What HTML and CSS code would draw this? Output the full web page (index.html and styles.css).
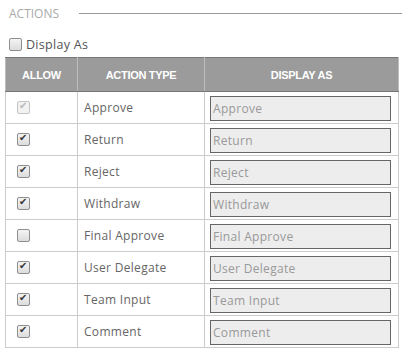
FILE: index.html
```html
<!DOCTYPE html>
<html lang="en">
<head>
    <meta charset="UTF-8">
    <title>Actions</title>
    <link rel="stylesheet" href="styles.css">
</head>
<body>
    <div class="panel">
        <div class="section-title">
            <span>ACTIONS</span>
            <div class="rule"></div>
        </div>

        <label class="display-toggle">
            <input type="checkbox" class="chk">
            <span>Display As</span>
        </label>

        <table class="actions">
            <thead>
                <tr>
                    <th class="col-allow">ALLOW</th>
                    <th class="col-type">ACTION TYPE</th>
                    <th class="col-display">DISPLAY AS</th>
                </tr>
            </thead>
            <tbody>
                <tr>
                    <td class="cell-allow"><input type="checkbox" class="chk" checked disabled></td>
                    <td>Approve</td>
                    <td class="cell-display"><input type="text" class="display-input" value="Approve" disabled></td>
                </tr>
                <tr>
                    <td class="cell-allow"><input type="checkbox" class="chk" checked></td>
                    <td>Return</td>
                    <td class="cell-display"><input type="text" class="display-input" value="Return" disabled></td>
                </tr>
                <tr>
                    <td class="cell-allow"><input type="checkbox" class="chk" checked></td>
                    <td>Reject</td>
                    <td class="cell-display"><input type="text" class="display-input" value="Reject" disabled></td>
                </tr>
                <tr>
                    <td class="cell-allow"><input type="checkbox" class="chk" checked></td>
                    <td>Withdraw</td>
                    <td class="cell-display"><input type="text" class="display-input" value="Withdraw" disabled></td>
                </tr>
                <tr>
                    <td class="cell-allow"><input type="checkbox" class="chk"></td>
                    <td>Final Approve</td>
                    <td class="cell-display"><input type="text" class="display-input" value="Final Approve" disabled></td>
                </tr>
                <tr>
                    <td class="cell-allow"><input type="checkbox" class="chk" checked></td>
                    <td>User Delegate</td>
                    <td class="cell-display"><input type="text" class="display-input" value="User Delegate" disabled></td>
                </tr>
                <tr>
                    <td class="cell-allow"><input type="checkbox" class="chk" checked></td>
                    <td>Team Input</td>
                    <td class="cell-display"><input type="text" class="display-input" value="Team Input" disabled></td>
                </tr>
                <tr>
                    <td class="cell-allow"><input type="checkbox" class="chk" checked></td>
                    <td>Comment</td>
                    <td class="cell-display"><input type="text" class="display-input" value="Comment" disabled></td>
                </tr>
            </tbody>
        </table>
    </div>
</body>
</html>
```

FILE: styles.css
```css
body {
    margin: 0;
    background: #fff;
    font-family: "Open Sans", Arial, sans-serif;
    font-size: 12px;
    color: #666;
}
.panel {
    width: 394px;
    padding: 4px 0 0 5px;
}
.section-title {
    display: flex;
    align-items: center;
    height: 18px;
    padding-left: 4px;
    color: #aaa;
    font-size: 12px;
}
.rule {
    flex: 1;
    height: 1px;
    background: #999;
    margin-left: 20px;
    margin-right: -3px;
}
.display-toggle {
    display: flex;
    align-items: center;
    gap: 4px;
    height: 20px;
    margin: 12px 0 3px 4px;
    color: #555;
    font-size: 12.5px;
    letter-spacing: 0.3px;
}
.chk {
    appearance: none;
    -webkit-appearance: none;
    width: 13px;
    height: 13px;
    margin: 0;
    border: 1px solid #8f8f8f;
    border-radius: 2px;
    background: linear-gradient(#f4f4f4, #dcdcdc);
    position: relative;
    display: block;
}
.chk:checked::after {
    content: "\2714";
    position: absolute;
    left: 1px;
    top: -2px;
    font-family: "DejaVu Sans", sans-serif;
    font-size: 10px;
    color: #333;
}
.chk:disabled {
    border-color: #c4c4c4;
    background: #f2f2f2;
}
.chk:disabled::after {
    color: #b8b8b8;
}
.actions {
    width: 394px;
    border-collapse: collapse;
    border: 1px solid #777;
}
.actions th {
    height: 33px;
    padding: 0;
    background: #9b9b9b;
    color: #fff;
    font-family: "Liberation Sans", Arial, sans-serif;
    font-weight: bold;
    font-size: 11px;
    letter-spacing: -0.3px;
    border: 1px solid #777;
    border-left-color: #bdbdbd;
    border-right-color: #bdbdbd;
}
.col-allow {
    width: 71px;
}
.col-type {
    width: 126px;
}
.actions td {
    height: 29px;
    padding: 0 0 0 6px;
    border: 1px solid #ccc;
    line-height: 16px;
    letter-spacing: 0.3px;
    color: #666;
}
.actions td.cell-allow {
    padding-left: 11px;
}
.actions td.cell-display {
    padding: 2px 7px 0 5px;
}
.display-input {
    box-sizing: border-box;
    display: block;
    width: 100%;
    height: 25px;
    margin: 0;
    padding: 0 2px;
    border: 1px solid #666;
    border-radius: 0;
    background: #ededed;
    color: #999;
    font-family: "Open Sans", Arial, sans-serif;
    font-size: 12px;
    letter-spacing: 0.3px;
}
```
